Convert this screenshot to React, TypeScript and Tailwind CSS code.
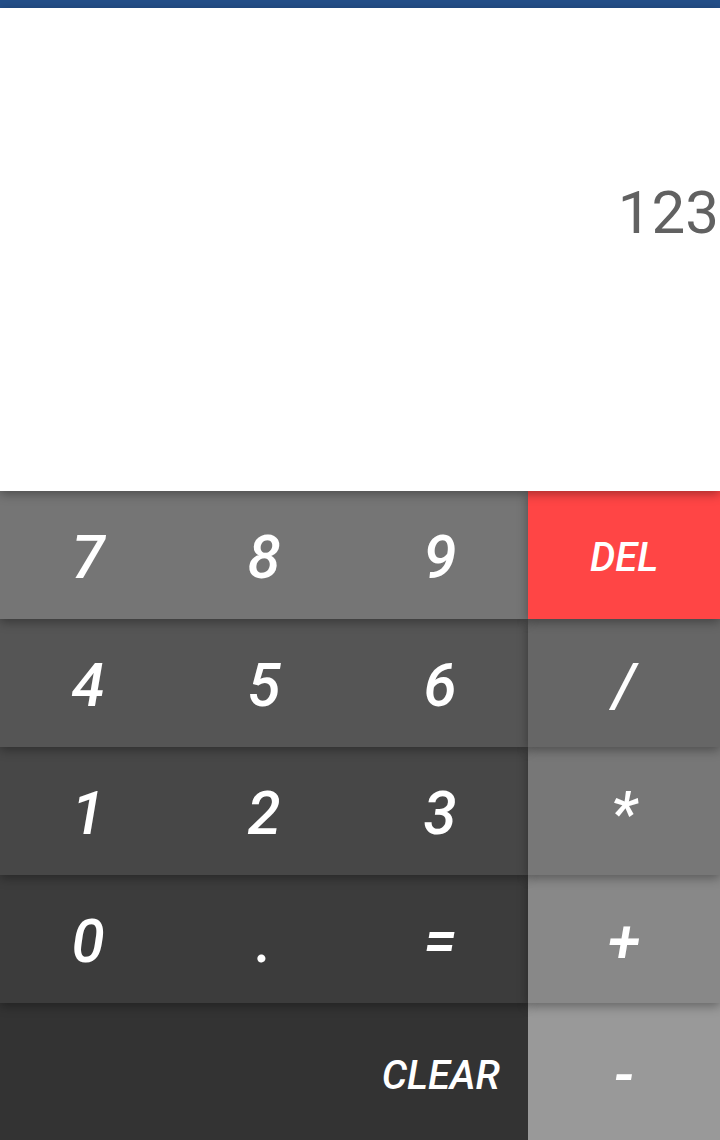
const rows = [
  { keys: ["7", "8", "9"], bg: "bg-[#757575]", op: "DEL", opBg: "bg-[#ff4545]", z: "z-[5]" },
  { keys: ["4", "5", "6"], bg: "bg-[#555555]", op: "/", opBg: "bg-[#666666]", z: "z-[4]" },
  { keys: ["1", "2", "3"], bg: "bg-[#474747]", op: "*", opBg: "bg-[#777777]", z: "z-[3]" },
  { keys: ["0", ".", "="], bg: "bg-[#3c3c3c]", op: "+", opBg: "bg-[#888888]", z: "z-[2]" },
];

export default function App() {
  return (
    <div className="w-[720px] h-[1140px] overflow-hidden flex flex-col bg-white font-['Roboto',sans-serif]">
      <div className="h-[8px] bg-[#244f89] shrink-0" />

      <div className="relative z-[6] h-[483px] shrink-0 bg-white flex items-center justify-end shadow-[0_3px_10px_rgba(0,0,0,0.35)]">
        <span className="text-[60px] leading-none text-[#616161] mt-[-74px] mr-[1px]">123</span>
      </div>

      {rows.map((row) => (
        <div key={row.op} className={`relative ${row.z} flex h-[128px] shrink-0`}>
          <div className={`w-[528px] grid grid-cols-3 ${row.bg} shadow-[0_3px_10px_rgba(0,0,0,0.35)]`}>
            {row.keys.map((k) => (
              <button
                key={k}
                type="button"
                className="flex items-center justify-center pt-[5px] text-white italic font-medium text-[60px] leading-none"
              >
                {k}
              </button>
            ))}
          </div>
          <button
            type="button"
            className={cn(
              "w-[192px] flex items-center justify-center pt-[5px] text-white italic font-medium leading-none shadow-[0_3px_10px_rgba(0,0,0,0.35)]",
              row.opBg,
              row.op === "DEL" ? "text-[40px]" : "text-[60px]"
            )}
          >
            {row.op}
          </button>
        </div>
      ))}

      <div className="relative z-[1] flex flex-1">
        <div className="w-[528px] bg-[#333333] flex items-center justify-end pr-[28px]">
          <button type="button" className="text-white italic font-medium text-[40px] leading-none mt-[8px]">
            CLEAR
          </button>
        </div>
        <button
          type="button"
          className="w-[192px] bg-[#999999] flex items-center justify-center pt-[8px] text-white italic font-medium text-[60px] leading-none"
        >
          -
        </button>
      </div>
    </div>
  );
}

function cn(...parts: (string | false | undefined)[]) {
  return parts.filter(Boolean).join(" ");
}
